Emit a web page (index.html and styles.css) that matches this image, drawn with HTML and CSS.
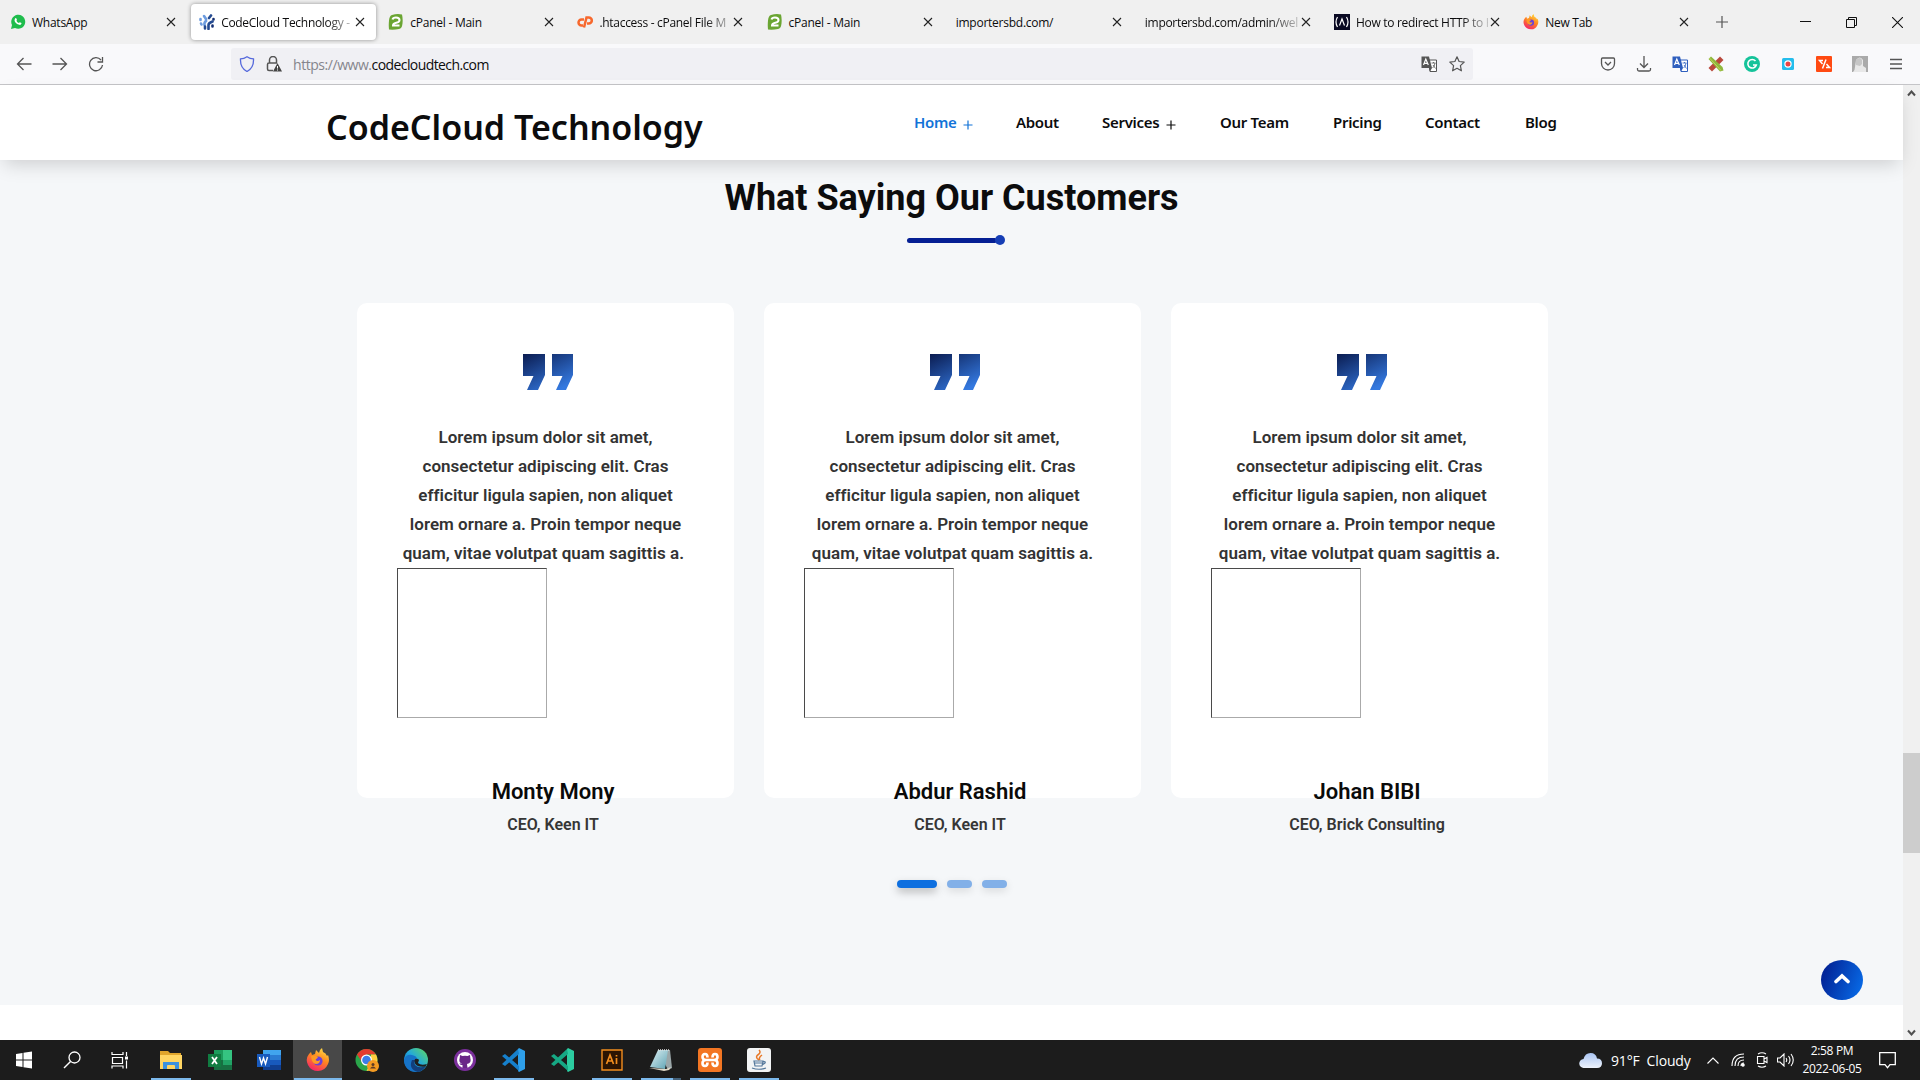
FILE: index.html
```html
<!DOCTYPE html>
<html lang="en">
<head>
<meta charset="utf-8">
<title>CodeCloud Technology</title>
<link rel="stylesheet" href="styles.css">
</head>
<body>
<svg class="defs" width="0" height="0">
  <defs>
    <linearGradient id="gq" x1="0" y1="0" x2=".7" y2="1"><stop offset="0" stop-color="#0b1c50"/><stop offset="1" stop-color="#3479e0"/></linearGradient>
    <linearGradient id="ff" x1=".8" y1="0" x2=".3" y2="1"><stop offset="0" stop-color="#ffe24a"/><stop offset=".45" stop-color="#ff8a1e"/><stop offset="1" stop-color="#f5226a"/></linearGradient>
    <linearGradient id="edge" x1="0" y1="1" x2="1" y2="0"><stop offset="0" stop-color="#0b5cb8"/><stop offset=".5" stop-color="#22a8dd"/><stop offset="1" stop-color="#62dc5a"/></linearGradient>
    <linearGradient id="cloud" x1="0" y1="0" x2="0" y2="1"><stop offset="0" stop-color="#a9c4f2"/><stop offset="1" stop-color="#eef3fc"/></linearGradient>
    <linearGradient id="note" x1="0" y1="0" x2="1" y2="1"><stop offset="0" stop-color="#dff1f4"/><stop offset="1" stop-color="#5ea3b3"/></linearGradient>
  </defs>
  <symbol id="x" viewBox="0 0 10 10"><path d="M1 1l8 8M9 1L1 9" stroke="#222" stroke-width="1.1" fill="none"/></symbol>
  <symbol id="cp2" viewBox="0 0 16 16"><path d="M4 1Q9-.5 14 .5q1 4 .5 9-.5 5-3.500 5.500-5 1-10 .5-.5-4 0-9Q1.500 1.500 4 1z" fill="#6aa532"/><path d="M4.500 5.500Q5 3.500 8 3.500q3.500 0 3.500 2.500 0 1.800-2.500 2.600Q5 9.500 5 11.500h6.500" stroke="#fff" stroke-width="2" fill="none"/></symbol>
  <symbol id="firefox" viewBox="0 0 24 24"><path d="M5 4l1 3 3-1 1-4 3 3q0-3 3-5l1 4q3 1 4 4l1-1q2 5 0 9-3 7-10 7T2 17Q-1 11 3 6z" fill="url(#ff)"/><circle cx="12" cy="13" r="4.600" fill="#6b40d8"/><path d="M5 8q4-1 7 1l-1 1.500q-2 .5-1 2 2 1 4-.5 0 4-4 4-4 0-5-8z" fill="#ff9a23"/></symbol>
  <symbol id="quote" viewBox="0 0 50 36"><path d="M0 0h22v21L15 36H4l6.500-14H0zM29 0h21v21l-7 15H33l6.500-14H29z" fill="url(#gq)"/></symbol>
  <symbol id="trans" viewBox="0 0 16 16"><path d="M7 4h8.500v11.500H9z" fill="#fff" stroke="currentColor"/><path d="M.5.500H8L11 12H.5z" fill="currentColor"/><path d="M8 12h3l-2 3.500z" fill="currentColor"/><path d="M2.500 9L4.800 3l2.500 6M3.500 7.300h3" stroke="#fff" fill="none" stroke-width="1.200"/><path d="M10.500 7h4M12.500 6v1M14 7q-.5 4-2.500 5M12 9l2.500 3.500" stroke="currentColor" fill="none" stroke-width=".8"/></symbol>
</svg>

<div class="tabs">
  <div class="tab"><svg class="fav" viewBox="0 0 16 16"><path d="M1 15l1-4A7 7 0 1 1 5 14z" fill="#1fbc4c"/><path d="M5 4.500q1-1 1.500.2l.5 1.200-.6.900q.8 1.700 2.500 2.300l.9-.8 1.700.8q.2 1.200-1.300 1.800Q7 11 5 8 4 6 5 4.500z" fill="#fff"/></svg><span>WhatsApp</span><svg class="close"><use href="#x"/></svg></div>
  <div class="tab active"><svg class="fav" viewBox="0 0 16 16"><g stroke-width="2.600" fill="none" stroke-linecap="round"><path d="M1.500 5v1M2 9.500l.5 1M5 2l2 3v2q-2 1.500-1.500 4" stroke="#6d9cdf"/><path d="M12 1.500L10 4M9.500 15v-4q0-2 4-3.500M6 14.500v-2" stroke="#244a91"/><path d="M14.500 5v.5M13.500 11.500v1" stroke="#152f72"/></g></svg><span class="fade">CodeCloud Technology -</span><svg class="close"><use href="#x"/></svg></div>
  <div class="tab"><svg class="fav"><use href="#cp2"/></svg><span>cPanel - Main</span><svg class="close"><use href="#x"/></svg></div>
  <div class="tab"><svg class="fav" viewBox="0 0 16 16"><path d="M7 5.500H4.500a3 3 0 0 0 0 6H6M7 13.500L9.500 3.500h2.300a3 3 0 0 1 0 6H10" stroke="#f7682d" stroke-width="2.500" fill="none"/></svg><span class="fade">.htaccess - cPanel File M</span><svg class="close"><use href="#x"/></svg></div>
  <div class="tab"><svg class="fav"><use href="#cp2"/></svg><span>cPanel - Main</span><svg class="close"><use href="#x"/></svg></div>
  <div class="tab"><span>importersbd.com/</span><svg class="close"><use href="#x"/></svg></div>
  <div class="tab"><span class="fade">importersbd.com/admin/wel</span><svg class="close"><use href="#x"/></svg></div>
  <div class="tab"><svg class="fav" viewBox="0 0 16 16"><path d="M0 0h16v16H0z" fill="#0a0a23"/><path d="M3.500 3q-3 5 0 10M12.500 3q3 5 0 10M5.500 11.500L8 5l2.500 6.500" stroke="#fff" stroke-width="1.200" fill="none"/></svg><span class="fade">How to redirect HTTP to H</span><svg class="close"><use href="#x"/></svg></div>
  <div class="tab"><svg class="fav"><use href="#firefox"/></svg><span>New Tab</span><svg class="close"><use href="#x"/></svg></div>
  <svg class="plus" viewBox="0 0 12 12"><path d="M6 0v12M0 6h12" stroke="#555" stroke-width="1.200"/></svg>
  <div class="win">
    <svg viewBox="0 0 11 11"><path d="M0 4.500h11" stroke="#111"/></svg>
    <svg viewBox="0 0 11 11"><path d="M.5 2.500h8v8h-8zM2.500 2.500v-2h8v8h-2" stroke="#111" fill="none"/></svg>
    <svg viewBox="0 0 10 10"><path d="M0 0l10 10M10 0L0 10" stroke="#111" fill="none"/></svg>
  </div>
</div>

<div class="toolbar">
  <div class="moves">
    <svg viewBox="0 0 16 16"><path d="M15.500 8H1.500M7.500 2l-6 6 6 6"/></svg>
    <svg viewBox="0 0 16 16"><path d="M.5 8h14M8.500 2l6 6-6 6"/></svg>
    <svg viewBox="0 0 16 16"><path d="M13 4A6.500 6.500 0 1 0 14.500 9M14.500 1v5h-5"/></svg>
  </div>
  <div class="url">
    <svg class="i16" viewBox="0 0 16 16"><path d="M8 .7q3 2 6.500 2.200Q15 12 8 15.500 1 12 1.500 2.900 5 2.700 8 .7z" fill="none" stroke="#5569dc" stroke-width="1.300"/></svg>
    <svg class="i16" viewBox="0 0 16 16"><path d="M3.500 7V4a3.500 3.500 0 0 1 7 0v3M7 14.500H3q-1.500 0-1.500-1.500V8.500Q1.500 7 3 7h8" fill="none" stroke="#555" stroke-width="1.500"/><path d="M11.500 7L16 15.500H7z" fill="#444"/><path d="M11.500 10v2.500M11.500 13.500v1" stroke="#fff"/></svg>
    <span class="addr"><i>https://www.</i>codecloudtech.com</span>
    <svg class="i16 gray"><use href="#trans"/></svg>
    <svg class="i16" viewBox="0 0 16 16"><path d="M8 .8l2.100 4.700 5.100.6-3.800 3.500 1 5.200L8 12.300l-4.400 2.500 1-5.200L.8 6.100l5.100-.6z" fill="none" stroke="#555" stroke-width="1.200" stroke-linejoin="round"/></svg>
  </div>
  <div class="ext">
    <svg viewBox="0 0 16 16"><path d="M2.500 2h11q1 0 1 1v4.500a6.500 6.500 0 0 1-13 0V3q0-1 1-1zM5 6l3 3 3-3" class="ln"/></svg>
    <svg viewBox="0 0 16 16"><path d="M8 0v11M4 7.500l4 4 4-4M1.500 12v1.500q0 1.500 1.500 1.500h10q1.500 0 1.500-1.500V12" class="ln"/></svg>
    <svg class="blue"><use href="#trans"/></svg>
    <svg viewBox="0 0 16 16"><path d="M12 .5L15.500 4 4 15.500.5 12z" fill="#b9483c"/><path d="M3 .5L.5 3 12 15.500l3.500-1-1-3.500z" fill="#8fb73c"/><path d="M1.500 2L13 14.500" stroke="#c3d65f"/></svg>
    <svg viewBox="0 0 16 16"><circle cx="8" cy="8" r="8" fill="#15c39a"/><path d="M11.500 5A4.300 4.300 0 1 0 12.300 9H9" stroke="#fff" stroke-width="1.600" fill="none"/></svg>
    <svg viewBox="0 0 16 16"><rect x="2" y="2" width="12" height="12" rx="1.500" fill="#25bdec"/><circle cx="8" cy="8" r="3.100" fill="#ed4242" stroke="#fff" stroke-width="1.200"/></svg>
    <svg viewBox="0 0 16 16"><rect width="16" height="16" rx="1" fill="#ff4a12"/><path d="M7 4.500H3.500l3 3.500M10 3.500L6.500 12.500M10.500 8l3 3.500H10" stroke="#fff" stroke-width="1.500" fill="none"/></svg>
    <svg viewBox="0 0 16 16"><path d="M0 0h16v16H0z" fill="#aaa"/><path d="M1 16q2-2 2-5L4 4q4-5 7 0v6l3 2v4z" fill="#e8e8e8"/><path d="M4 9V4q4-4 6 0v4l-2 2z" fill="#c6c6c6"/></svg>
    <svg viewBox="0 0 16 16"><path d="M2 3.500h12M2 8h12M2 12.500h12" class="ln"/></svg>
  </div>
</div>

<div class="view">
  <div class="page">
    <header class="site">
      <div class="logo">CodeCloud Technology</div>
      <nav>
        <a class="on">Home <svg viewBox="0 0 10 10"><path d="M5 .5v9M.5 5h9"/></svg></a><a>About</a><a>Services <svg viewBox="0 0 10 10"><path d="M5 .5v9M.5 5h9"/></svg></a><a>Our Team</a><a>Pricing</a><a>Contact</a><a>Blog</a>
      </nav>
    </header>
    <section class="customers">
      <h2>What Saying Our Customers</h2>
      <div class="rule"><b></b></div>
      <div class="cards">
        <article><div class="card"><svg class="q"><use href="#quote"/></svg><p>Lorem ipsum dolor sit amet,<br>consectetur adipiscing elit. Cras<br>efficitur ligula sapien, non aliquet<br>lorem ornare a. Proin tempor neque<br>quam, vitae volutpat quam sagittis a.&nbsp;</p><div class="frame"></div><h3>Monty Mony</h3><h4>CEO, Keen IT</h4></div></article>
        <article><div class="card"><svg class="q"><use href="#quote"/></svg><p>Lorem ipsum dolor sit amet,<br>consectetur adipiscing elit. Cras<br>efficitur ligula sapien, non aliquet<br>lorem ornare a. Proin tempor neque<br>quam, vitae volutpat quam sagittis a.</p><div class="frame"></div><h3>Abdur Rashid</h3><h4>CEO, Keen IT</h4></div></article>
        <article><div class="card"><svg class="q"><use href="#quote"/></svg><p>Lorem ipsum dolor sit amet,<br>consectetur adipiscing elit. Cras<br>efficitur ligula sapien, non aliquet<br>lorem ornare a. Proin tempor neque<br>quam, vitae volutpat quam sagittis a.</p><div class="frame"></div><h3>Johan BIBI</h3><h4>CEO, Brick Consulting</h4></div></article>
      </div>
      <div class="dots"><b class="cur"></b><b></b><b></b></div>
    </section>
    <div class="totop"><svg viewBox="0 0 16 11"><path d="M2 8.500l6-5.500 6 5.500" stroke="#fff" stroke-width="3.600" fill="none" stroke-linecap="round"/></svg></div>
  </div>
  <div class="scroll">
    <svg viewBox="0 0 9 7"><path d="M1 5.500l3.500-4 3.500 4"/></svg>
    <div class="thumb"></div>
    <svg viewBox="0 0 9 7"><path d="M1 1.500l3.500 4 3.500-4"/></svg>
  </div>
</div>

<div class="taskbar">
  <div class="apps">
    <div><svg viewBox="0 0 24 24"><path d="M4 6l6.500-1v6.500H4zM11.500 4.800L20 3.500v8h-8.500zM4 12.500h6.500V19L4 18zM11.500 12.500H20v8l-8.500-1.300z" fill="#fff"/></svg></div>
    <div><svg viewBox="0 0 24 24"><circle cx="14.500" cy="9.500" r="5.500" stroke="#fff" stroke-width="1.300" fill="none"/><path d="M10.500 13.500L4 20" stroke="#fff" stroke-width="1.500"/></svg></div>
    <div><svg viewBox="0 0 24 24"><path d="M3 4v2.500h11V4M3.500 9.500h10v6h-10zM3 20.500V18h11v2.500M17.500 4v4M17.500 12.500v8" stroke="#fff" stroke-width="1.200" fill="none"/><path d="M16 8.500h3v3h-3z" fill="#fff"/></svg></div>
    <div class="run"><svg viewBox="0 0 24 24"><path d="M1 3h8l2 2h11v5H1z" fill="#e0a52c"/><path d="M1 7h22v14H1z" fill="#ffd563"/><path d="M4 14h16v7h-4v-3q0-1-1-1H9q-1 0-1 1v3H4z" fill="#3c91df"/></svg></div>
    <div><svg viewBox="0 0 24 24"><path d="M6 2h18v20H6z" fill="#1c9c5c"/><path d="M15 2h9v10h-9z" fill="#35c481"/><path d="M6 12h18v10H6z" fill="#176f42"/><path d="M15 12h9v5h-9z" fill="#21a366"/><path d="M0 6h13v13H0z" fill="#107c41"/><path d="M4 9l5 7M9 9l-5 7" stroke="#fff" stroke-width="1.800"/></svg></div>
    <div><svg viewBox="0 0 24 24"><path d="M6 2h18v5H6z" fill="#41a5ee"/><path d="M6 7h18v5H6z" fill="#2b7cd3"/><path d="M6 12h18v5H6z" fill="#185abd"/><path d="M6 17h18v5H6z" fill="#103f91"/><path d="M0 6h13v13H0z" fill="#185abd"/><path d="M2.500 9l2 7 2-6 2 6 2-7" stroke="#fff" stroke-width="1.400" fill="none"/></svg></div>
    <div class="run focus"><svg><use href="#firefox"/></svg></div>
    <div><svg viewBox="0 0 24 24"><circle cx="11.500" cy="12" r="11" fill="#2aa54a"/><path d="M2 6.500A11 11 0 0 1 21 6.500h-9.500L7 14z" fill="#e33b2e"/><path d="M21 6.500A11 11 0 0 1 11.500 23L16 14V6.500z" fill="#ffcd40"/><circle cx="11.500" cy="12" r="5.500" fill="#fff"/><circle cx="11.500" cy="12" r="4.300" fill="#3b7de8"/><circle cx="18" cy="18" r="6" fill="#f49b22"/><circle cx="18" cy="16.500" r="1.500" fill="#5d3b25"/><path d="M15 20.500q3-4 6 0z" fill="#5d3b25"/></svg></div>
    <div><svg viewBox="0 0 24 24"><circle cx="12" cy="12" r="12" fill="url(#edge)"/><path d="M0 12Q2 6 8 7q5 1 5 4-4 1-3 6 1 4 5 6.500Q1 25 0 12z" fill="#1673c8"/><path d="M8 12q-4 9 6 12 5-1 8-6-7 3-11-1-1-2 0-5z" fill="#123f7c"/><path d="M11 11q3-1 4 1l-1 3q3 3 9 1l-1.500 2.500q-8 1-10.500-3-1-3 0-4.500z" fill="#202020"/></svg></div>
    <div><svg viewBox="0 0 24 24"><circle cx="12" cy="12" r="11" fill="#7b2f9c"/><circle cx="12" cy="12" r="8" fill="#fff"/><path d="M7 7l2.500 1q2.500-.6 5 0L17 7l.3 3q1.700 5-3.300 6l.5 4h-5v-3q-3 .5-3-2 1.500 1 3 .5L10 16q-5-1-3.300-6z" fill="#6a2788"/></svg></div>
    <div class="run"><svg viewBox="0 0 24 24"><path d="M17 0l6 3v18l-6 3-1-1V1z" fill="#2e9fea"/><path d="M17 6L3 18l-3-2L16 1zM0 8l3-2 14 12v5z" fill="#1680cc"/></svg></div>
    <div><svg viewBox="0 0 24 24"><path d="M17 0l6 3v18l-6 3-1-1V1z" fill="#2ccda1"/><path d="M17 6L3 18l-3-2L16 1zM0 8l3-2 14 12v5z" fill="#16a884"/></svg></div>
    <div class="run"><svg viewBox="0 0 24 24"><path d="M2 2h20v20H2z" fill="#2b1402" stroke="#f28d1e" stroke-width="1.400"/><path d="M6.500 16L10 7l3.500 9M8 13h4M16.500 10v6M16.500 7v1.500" stroke="#f28d1e" stroke-width="1.700" fill="none"/></svg></div>
    <div class="run multi"><svg viewBox="0 0 24 24"><path d="M9 2h12l2 18-4 2z" fill="#9aa6a8"/><path d="M9 2h10l-3 19-15-2z" fill="url(#note)"/><path d="M0 20l17 1 5-2-2 3-5 1z" fill="#ded8c7"/><path d="M9 2h12" stroke="#ddd" stroke-width="1.500" stroke-dasharray="1 1"/></svg></div>
    <div class="run"><svg viewBox="0 0 24 24"><rect width="24" height="24" rx="3" fill="#f37623"/><path d="M9.500 9.500Q9.500 6 7 6T4.500 9 8 12q-3.500 0-3.500 3T7 18t2.500-3.500M14.500 9.500Q14.500 6 17 6t2.500 3-3.500 3q3.500 0 3.500 3T17 18t-2.500-3.500M8 12h8" stroke="#fff" stroke-width="2.600" fill="none"/></svg></div>
    <div class="run"><svg viewBox="0 0 24 24"><rect width="24" height="24" rx="3" fill="#f2f4f5"/><path d="M12 12Q7 9 12 6q2-2 0-4M13 12q-2-2 2-5" stroke="#e87826" stroke-width="1.500" fill="none"/><path d="M7 13h9l-1 5H8zM8 15h7M16 14q3-1 2 1l-3 2M5 20q7 2.500 14 0" stroke="#53779b" stroke-width="1.200" fill="none"/></svg></div>
  </div>
  <div class="tray">
    <svg class="cloud" viewBox="0 0 23 15"><path d="M5 15a4.500 4.500 0 0 1-.5-9Q6 0 11.500 0T18 5.500q5 0 5 4.700Q23 15 18 15z" fill="url(#cloud)"/></svg>
    <span class="weather">91°F&nbsp; Cloudy</span>
    <svg class="up" viewBox="0 0 12 7"><path d="M.5 6.500L6 1l5.500 5.500"/></svg>
    <svg class="wifi" viewBox="0 0 14 14"><path d="M1 13Q1 1 13 1M4 13q0-9 9-9M7 13q0-6 6-6M10 13q0-3 3-3"/><circle cx="12" cy="12" r="1.200" fill="#fff"/></svg>
    <svg class="cam" viewBox="0 0 14 16"><path d="M3 2q4-2.500 8 0M3 14q4 2.500 8 0M2.500 4.500H9v7H2.500zM9 7l3-1.500v5L9 9"/></svg>
    <svg class="vol" viewBox="0 0 17 14"><path d="M.5 5v4H3l4 4V1L3 5zM9 5q1.500 2 0 4M11.500 3q3 4 0 8M14 1q4.500 6 0 12"/></svg>
    <div class="clock">2:58 PM<br>2022-06-05</div>
    <svg class="msg" viewBox="0 0 17 17"><path d="M.7.700h15.600v12H11l-2.500 3-2.500-3H.7z"/></svg>
  </div>
</div>
</body>
</html>
```
FILE: styles.css
```css
* { box-sizing: border-box; }
body { margin: 0; width: 1920px; height: 1080px; overflow: hidden; background: #fff; font-family: "Open Sans", "Noto Sans", sans-serif; color: #0c0c0d; }
.defs { display: block; }
svg { flex: none; }

/* browser tabs */
.tabs { height: 44px; background: #f0f0f0; display: flex; align-items: center; gap: 4.15px; padding-left: 2px; }
.tab { width: 185px; height: 36px; display: flex; align-items: center; padding: 0 11px 0 8px; border-radius: 4px; font-size: 12px; letter-spacing: -.25px; }
.tab.active { background: #fff; box-shadow: 0 0 4px rgba(0,0,0,.4); }
.tab span { flex: 1; min-width: 0; white-space: nowrap; padding-top: 1px; }
.tab .fade { letter-spacing: -.3px; -webkit-mask-image: linear-gradient(90deg, #000 80%, rgba(0,0,0,.2)); mask-image: linear-gradient(90deg, #000 80%, rgba(0,0,0,.2)); }
.fav { width: 16px; height: 16px; margin-right: 6px; }
.close { width: 10px; height: 10px; margin-left: 2px; }
.plus { width: 12px; height: 12px; margin-left: 12px; }
.win { display: flex; gap: 35px; margin: 0 17px 0 auto; }
.win svg { width: 11px; height: 11px; }

/* navigation toolbar */
.toolbar { height: 41px; background: #f9f9fb; border-bottom: 1px solid #c5c5c8; display: flex; align-items: center; }
.moves { width: 231px; display: flex; gap: 20px; padding-left: 16px; }
.moves svg { width: 16px; height: 16px; fill: none; stroke: #555; stroke-width: 1.3; }
.url { width: 1242px; height: 32px; background: #f0f0f4; border-radius: 3px; display: flex; align-items: center; padding: 0 8px; gap: 11px; }
.i16 { width: 16px; height: 16px; }
.addr { flex: 1; font-size: 14px; letter-spacing: -.59px; padding-top: 1px; }
.addr i { font-style: normal; letter-spacing: -.45px; color: #85858c; }
.gray { color: #555; }
.url .gray { margin-right: 1px; margin-left: -1px; }
.blue { color: #2f5fbe; }
.ext { margin-left: auto; display: flex; gap: 20px; padding-right: 16px; }
.ext svg { width: 16px; height: 16px; }
.ln { fill: none; stroke: #555; stroke-width: 1.3; }

/* web page */
.view { height: 955px; display: flex; }
.page { width: 1903px; position: relative; }
.site { position: relative; height: 75px; background: #fff; box-shadow: 0 8px 18px -4px rgba(0,0,0,.17); display: flex; padding-left: 326px; }
.logo { width: 588px; font: 600 34px/84px "Noto Sans", sans-serif; white-space: nowrap; }
nav { display: grid; grid-template-columns: 102px 86px 118px 113px 92px 100px 60px; font: 600 15px/75px "Noto Sans", sans-serif; letter-spacing: -.3px; white-space: nowrap; }
nav svg { width: 10px; height: 10px; margin-left: 3px; vertical-align: -2px; stroke: currentColor; stroke-width: 1.2; }
nav .on { color: #1273d8; }
.customers { height: 845px; background: #f5f7f9; padding-top: 15px; font-family: Roboto, sans-serif; }
.customers h2 { margin: 0; text-align: center; font-size: 36px; line-height: 46px; font-weight: 700; }
.rule { width: 98px; height: 10px; margin: 14px auto 0 907px; display: flex; align-items: center; }
.rule::before { content: ""; width: 90px; height: 5px; background: #051f94; border-radius: 3px; }
.rule b { width: 10px; height: 10px; margin-left: -2px; border-radius: 50%; background: #163eb5; }
.cards { display: grid; grid-template-columns: repeat(3, 377px); gap: 30px; margin: 58px 0 0 357px; }
.card { height: 495px; background: #fff; border-radius: 10px; padding: 51px 40px 0; text-align: center; }
.q { display: block; width: 50px; height: 36px; margin: 0 auto 0 126px; }
.card p { margin: 33px -10px 0; font-size: 17px; line-height: 29px; letter-spacing: .02px; font-weight: 600; color: #333; }
.frame { width: 150px; height: 150px; border: 1px solid; border-color: #4a4a4a #aaa #aaa #4a4a4a; }
.card h3 { margin: 59px 0 0 15px; font-size: 22px; line-height: 30px; font-weight: 600; color: #0a0a0a; }
.card h4 { margin: 3px 0 0 15px; font-size: 16px; line-height: 30px; font-weight: 600; color: #363636; white-space: nowrap; }
.dots { display: flex; gap: 10px; margin: 82px 0 0 897px; }
.dots b { width: 25px; height: 8px; border-radius: 4px; background: #82b0e8; box-shadow: 0 3px 8px rgba(0,0,0,.12); }
.dots .cur { width: 40px; background: #0d6fe0; box-shadow: 0 4px 8px rgba(0,0,0,.25); }
.totop { position: absolute; left: 1821px; top: 875px; width: 42px; height: 40px; border-radius: 50%; background: linear-gradient(110deg, #03279a 15%, #0768e4 90%); display: flex; align-items: center; justify-content: center; }
.totop svg { width: 16px; height: 11px; margin-bottom: 4px; }
.scroll { width: 17px; background: #f0f0f0; display: flex; flex-direction: column; align-items: center; padding: 5px 0 4px; }
.scroll svg { width: 9px; height: 7px; fill: none; stroke: #505050; stroke-width: 2; }
.thumb { width: 17px; height: 100px; background: #cdcdcd; margin: 656px 0 auto; }

/* taskbar */
.taskbar { height: 40px; background: #1c1c1c; display: flex; justify-content: space-between; color: #fff; }
.apps { display: grid; grid-template-columns: 48px 48px 50px repeat(13, 49px); }
.apps div { display: flex; align-items: center; justify-content: center; }
.apps svg { width: 24px; height: 24px; }
.run { background: linear-gradient(#7cb9ec, #7cb9ec) center bottom / 40px 2px no-repeat; }
.apps .focus { background: linear-gradient(#7cb9ec, #7cb9ec) center bottom / 48px 2px no-repeat #484848; }
.multi { background: linear-gradient(90deg, #7cb9ec 80%, #45627b 80%) center bottom / 40px 2px no-repeat; }
.tray { display: flex; align-items: center; padding-right: 24px; }
.tray svg { fill: none; stroke: #fff; stroke-width: 1.1; }
.tray .cloud { width: 23px; height: 15px; stroke: none; margin-right: 9px; }
.weather { width: 96px; font-size: 14px; letter-spacing: -.15px; white-space: nowrap; }
.tray .up { width: 12px; height: 7px; }
.tray .wifi { width: 14px; height: 14px; margin-left: 12px; }
.tray .cam { width: 14px; height: 16px; margin-left: 10px; }
.tray .vol { width: 17px; height: 14px; margin-left: 8px; }
.clock { width: 60px; margin: 0 17px 0 8px; text-align: center; font-size: 12px; line-height: 18px; letter-spacing: -.35px; white-space: nowrap; }
.tray .msg { width: 17px; height: 17px; stroke-width: 1.3; }
```
